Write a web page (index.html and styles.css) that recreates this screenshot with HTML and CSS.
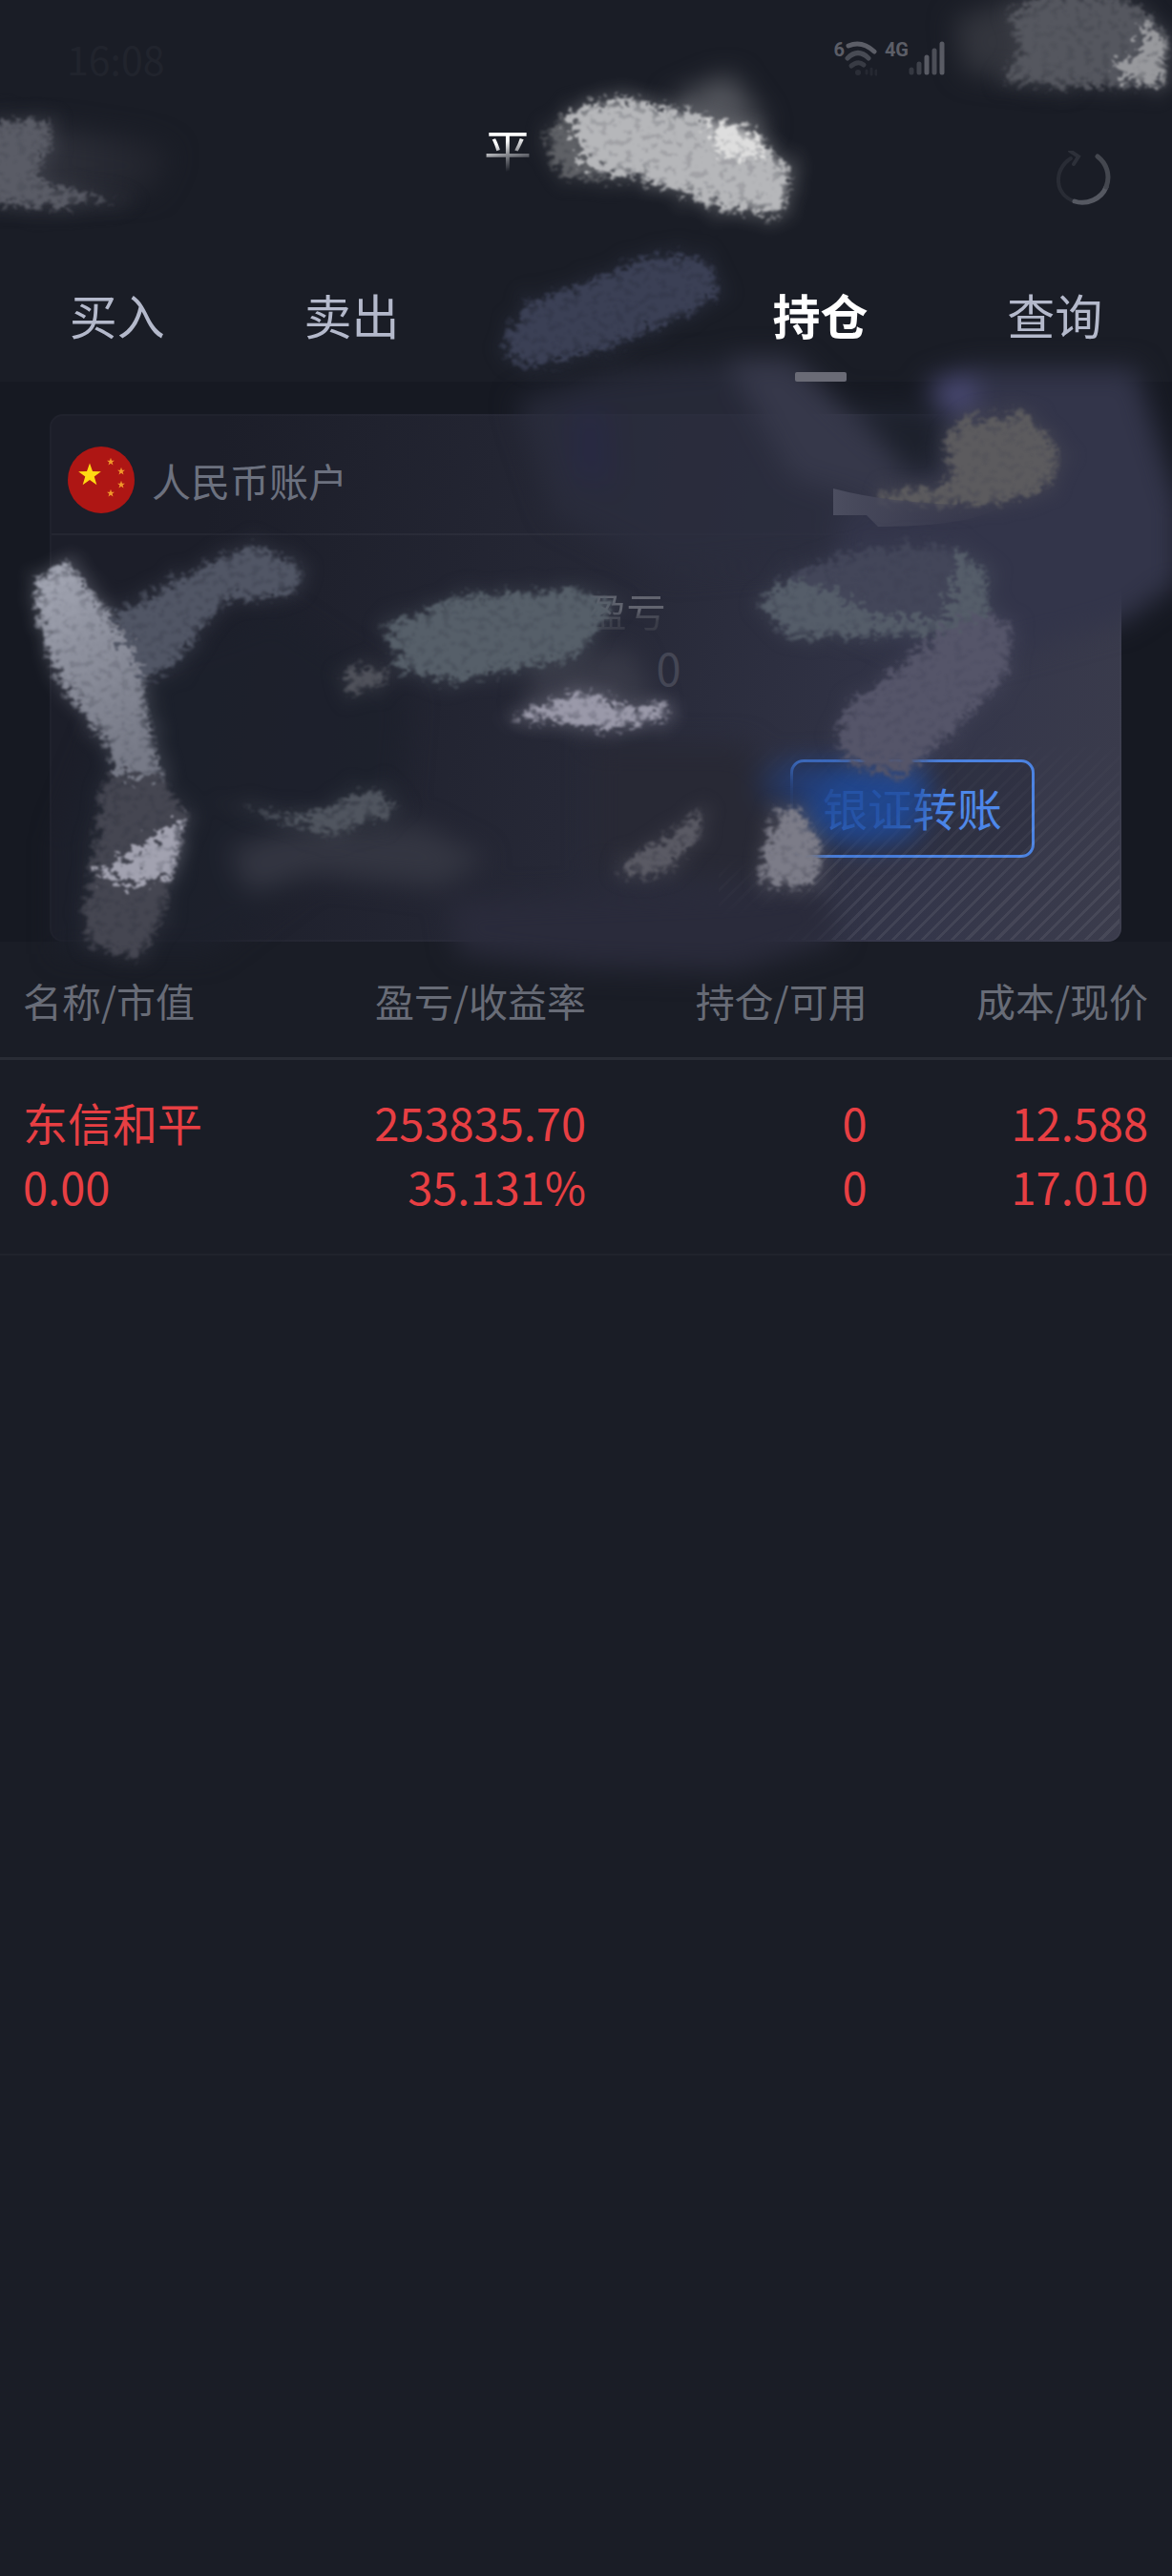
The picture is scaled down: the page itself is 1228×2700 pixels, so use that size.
FILE: index.html
```html
<!DOCTYPE html>
<html lang="zh-CN">
<head>
    <meta charset="UTF-8">
    <meta name="viewport" content="width=device-width, initial-scale=1.0">
    <title>持仓</title>
    <link rel="stylesheet" href="styles.css">
</head>
<body>
    <header class="header">
        <div class="status-bar">
            <span class="time">16:08</span>
            <div class="signals">
                <span class="net">6</span>
                <svg class="wifi" viewBox="0 0 34 38" fill="none" stroke-linecap="round">
                    <path d="M4 6Q18 0 31 12" stroke="#5c5e67" stroke-width="5"/>
                    <path d="M3 19Q14 8 25 19" stroke="#484b54" stroke-width="5"/>
                    <path d="M7 27Q14 21 20 26" stroke="#383b44" stroke-width="5"/>
                    <circle cx="14" cy="34" r="3" fill="#2b2e37"/>
                    <path d="M23 35v-3M28 36v-6M33 36v-4" stroke="#252831" stroke-width="3"/>
                </svg>
                <span class="net net-4g">4G</span>
                <svg class="bars" viewBox="0 0 38 38" fill="none" stroke-width="5" stroke-linecap="round">
                    <path d="M3 31v3" stroke="#353841"/>
                    <path d="M11 25v9" stroke="#3f424b"/>
                    <path d="M19 18v16" stroke="#595b64"/>
                    <path d="M27 11v23" stroke="#4d4f58"/>
                    <path d="M35 4v30" stroke="#5c5e67"/>
                </svg>
            </div>
        </div>

        <div class="title-bar">
            <h1 class="title">平</h1>
            <button class="refresh" type="button" aria-label="刷新">
                <svg viewBox="0 0 60 60" fill="none" stroke-linecap="round">
                    <path d="M18 8C-1 20 1 47 22 53" stroke="#292c35" stroke-width="4"/>
                    <path d="M22 53C34 57 50 51 55 38" stroke="#555861" stroke-width="5"/>
                    <path d="M55 38C60 25 55 13 46 6" stroke="#44474f" stroke-width="5"/>
                    <path d="M17 0l9 6-5 8" stroke="#2d3039" stroke-width="4"/>
                </svg>
            </button>
        </div>

        <nav class="tabs">
            <a class="tab" href="#buy">买入</a>
            <a class="tab" href="#sell">卖出</a>
            <span class="tab"></span>
            <a class="tab tab-active" href="#holdings">持仓</a>
            <a class="tab" href="#query">查询</a>
        </nav>
    </header>

    <main>
        <section class="account">
            <div class="card">
                <div class="card-head">
                    <svg class="flag" viewBox="0 0 70 70">
                        <defs>
                            <path id="star" d="M0-10L2.4-3.2 9.5-3.1 3.8 1.2 5.9 8.1 0 4 -5.9 8.1 -3.8 1.2 -9.5-3.1 -2.4-3.2Z"/>
                        </defs>
                        <circle cx="35" cy="35" r="35" fill="#ae1614"/>
                        <use href="#star" transform="translate(23 30) scale(1.25)" fill="#ffd813"/>
                        <g fill="#f0992b">
                            <use href="#star" transform="translate(45 16) scale(.42)"/>
                            <use href="#star" transform="translate(56 26) scale(.42)"/>
                            <use href="#star" transform="translate(56 40) scale(.42)"/>
                            <use href="#star" transform="translate(45 49) scale(.42)"/>
                        </g>
                    </svg>
                    <h2 class="card-title">人民币账户</h2>
                </div>
                <div class="card-body">
                    <div class="profit">
                        <span class="profit-label">盈亏</span>
                        <span class="profit-value">0</span>
                    </div>
                    <button class="transfer" type="button">银证转账</button>
                </div>
            </div>
        </section>

        <table class="holdings">
            <thead>
                <tr>
                    <th>名称/市值</th>
                    <th>盈亏/收益率</th>
                    <th>持仓/可用</th>
                    <th>成本/现价</th>
                </tr>
            </thead>
            <tbody>
                <tr>
                    <td><span>东信和平</span><span>0.00</span></td>
                    <td><span>253835.70</span><span>35.131%</span></td>
                    <td><span>0</span><span>0</span></td>
                    <td><span>12.588</span><span>17.010</span></td>
                </tr>
            </tbody>
        </table>
    </main>

    <!-- brush strokes that hide the private figures -->
    <svg class="strokes" viewBox="0 0 1228 1060" aria-hidden="true">
        <defs>
            <filter id="brush" x="-20%" y="-20%" width="140%" height="140%" color-interpolation-filters="sRGB">
                <feTurbulence type="fractalNoise" baseFrequency="0.11 0.15" numOctaves="4" seed="4" result="noise"/>
                <feDisplacementMap in="SourceGraphic" in2="noise" scale="44" xChannelSelector="R" yChannelSelector="G" result="rough"/>
                <feGaussianBlur in="rough" stdDeviation="8" result="soft"/>
                <feColorMatrix in="noise" type="matrix" values="0 0 0 0 1  0 0 0 0 1  0 0 0 0 1  4 0 0 0 -1.5" result="grain"/>
                <feComposite in="soft" in2="grain" operator="arithmetic" k2="2.4" k3="1" k4="-1.6" result="mask"/>
                <feComposite in="rough" in2="mask" operator="in" result="cut"/>
                <feGaussianBlur in="cut" stdDeviation="1" result="body"/>
                <feComponentTransfer in="soft" result="halo">
                    <feFuncA type="linear" slope="0.35"/>
                </feComponentTransfer>
                <feMerge>
                    <feMergeNode in="halo"/>
                    <feMergeNode in="body"/>
                </feMerge>
            </filter>
            <filter id="smudge" x="-20%" y="-20%" width="140%" height="140%" color-interpolation-filters="sRGB">
                <feGaussianBlur stdDeviation="14"/>
            </filter>
            <linearGradient id="paint" x1="0" y1="0" x2="0.4" y2="1">
                <stop offset="0" stop-color="#a9acb9"/>
                <stop offset="0.5" stop-color="#8d909d"/>
                <stop offset="1" stop-color="#777a87"/>
            </linearGradient>
            <linearGradient id="trail" x1="0" y1="0" x2="1" y2="0">
                <stop offset="0" stop-color="#33353f"/>
                <stop offset="1" stop-color="#20222b"/>
            </linearGradient>
            <linearGradient id="tail">
                <stop offset="0" stop-color="#4c4e60"/>
                <stop offset="1" stop-color="#3a3a4d" stop-opacity="0.2"/>
            </linearGradient>
        </defs>

        <!-- top of the page -->
        <g filter="url(#smudge)">
            <path d="M0 135L60 135 150 148 180 160 160 200 60 206 0 205Z" fill="url(#trail)"/>
            <path d="M1000 20L1060 0 1120 5 1120 88 1010 76Z" fill="#33353d"/>
            <path d="M700 105L765 78 805 135 740 130Z" fill="#55575e"/>
        </g>
        <g filter="url(#brush)">
            <path d="M-20 124L56 120 60 150 42 180 62 194 150 212 60 222-20 218Z" fill="#5a5c66"/>
            <path d="M1050 8L1100-12 1170-10 1212 12 1230 45 1222 96 1130 96 1040 88 1070 50Z" fill="#55575f"/>
            <path d="M1195 20L1224 40 1224 90 1180 86 1168 66 1195 56Z" fill="#98999d"/>
            <path d="M563 148L600 108 660 110 660 190 590 192Z" fill="#5f6166"/>
            <path d="M592 114L650 96 720 112 792 134 838 178 824 230 760 224 690 198 614 176Z" fill="#b6b7ba"/>
            <path d="M742 122L800 136 808 166 754 164Z" fill="#dedede"/>
            <path d="M520 370L545 314 620 290 690 260 745 266 762 312 700 344 640 370 560 390Z" fill="#3b4055"/>
        </g>

        <!-- right corner of the card -->
        <g filter="url(#smudge)">
            <path d="M540 420L640 390 740 380 850 400 960 500 940 580 700 600 580 540Z" fill="#2b2d3d" opacity=".8"/>
            <path d="M600 430L635 430 640 510 600 500Z" fill="#26264a" opacity=".5"/>
            <path d="M760 375L830 375 960 500 930 530 830 500Z" fill="#36384a"/>
            <path d="M970 402L1020 386 1190 386 1210 450 1235 530 1235 610 1180 650 1000 700 870 640 880 540 1000 500Z" fill="#33354a"/>
            <path d="M890 420L990 425 985 495 950 495Z" fill="#1d212c"/>
            <path d="M975 400L1022 392 1020 430 990 430Z" fill="#4c4c78"/>
        </g>
        <g filter="url(#brush)">
            <path d="M918 512L990 506 990 452 1010 434 1080 430 1116 472 1108 512 1040 534 920 532Z" fill="#5c5b5e"/>
        </g>
        <path d="M873 512Q940 530 1050 530 1020 552 920 552L908 540H873Z" fill="url(#tail)"/>

        <!-- card figures -->
        <g filter="url(#smudge)">
            <path d="M60 880L130 700 290 640 430 730 420 850 220 1000 60 1000Z" fill="#1d202c" opacity=".8"/>
            <path d="M240 890L300 872 440 864 510 900 460 930 330 915 260 936Z" fill="#343642"/>
            <path d="M470 945L860 930 880 985 770 1018 610 1014 480 1000Z" fill="#2a2b3b"/>
            <path d="M620 780L780 780 840 840 850 930 700 920 620 910Z" fill="#282935"/>
            <path d="M560 690L660 680 690 745 550 745Z" fill="#40414f" opacity=".7"/>
            <path d="M820 800L965 798 975 840 955 880 900 888 850 874Z" fill="#1f4a9a" opacity=".85"/>
            <path d="M795 805L880 800 850 850 800 840Z" fill="#253a6c" opacity=".7"/>
        </g>
        <g filter="url(#brush)">
            <path d="M120 640L200 594 270 564 322 594 314 624 232 636 186 704 146 716Z" fill="#515665"/>
            <path d="M30 612L74 582 110 632 152 710 176 822 134 824 98 768 50 696Z" fill="url(#paint)"/>
            <path d="M398 652L480 620 614 614 652 630 622 674 600 696 470 720 420 706Z" fill="#565f69"/>
            <path d="M348 708L380 692 416 704 400 724 362 734Z" fill="#50525b"/>
            <path d="M518 754L612 720 660 738 706 732 706 756 636 770Z" fill="#9a99a9"/>
            <path d="M790 636L824 598 910 570 994 566 1038 592 1042 646 960 670 826 672Z" fill="#434659"/>
            <path d="M790 636L828 602 870 618 920 646 990 648 1010 572 1040 596 1042 644 960 670 830 672Z" fill="#555d69"/>
            <path d="M872 770L886 738 970 672 1020 644 1066 650 1062 708 1002 772 950 820 888 804Z" fill="#555569"/>
            <path d="M108 812L166 812 204 850 190 900 176 960 150 1010 84 994 88 940Z" fill="#454651"/>
            <path d="M98 918L196 856 186 920 140 928Z" fill="#a2a2b0"/>
            <path d="M226 840L320 850 392 820 430 850 346 880Z" fill="#50555f"/>
            <path d="M644 902L690 880 742 838 736 882 696 922 646 920Z" fill="#5a5a64"/>
            <path d="M810 842L844 846 866 886 860 932 792 936Z" fill="#7c7c88"/>
        </g>
    </svg>
</body>
</html>
```
FILE: styles.css
```css
* {
    box-sizing: border-box;
}

body {
    position: relative;
    margin: 0;
    min-height: 100vh;
    overflow-x: hidden;
    background-color: #1a1d26;
    font-family: "Noto Sans CJK SC", sans-serif;
}

button {
    padding: 0;
    border: none;
    background: none;
    font-family: inherit;
    cursor: pointer;
}

/* status bar */
.status-bar {
    display: flex;
    justify-content: space-between;
    align-items: center;
    height: 98px;
    padding: 24px 238px 0 70px;
}

.time {
    color: #21242d;
    font-size: 41px;
}

.signals {
    display: flex;
    align-items: flex-start;
}

.net {
    color: #5c5e67;
    font-family: Roboto, sans-serif;
    font-size: 20px;
    font-weight: bold;
    line-height: 20px;
}

.net-4g {
    margin-left: 8px;
}

.wifi {
    width: 34px;
    height: 38px;
}

.bars {
    width: 38px;
    height: 38px;
}

/* title */
.title-bar {
    display: flex;
    justify-content: center;
    position: relative;
    height: 120px;
}

.title {
    width: 214px;
    margin: 0;
    background: linear-gradient(165deg, #fff 42%, #8d8f95 52%, #1a1d26 66%);
    background-size: 53px 100%;
    background-repeat: no-repeat;
    background-clip: text;
    -webkit-background-clip: text;
    color: transparent;
    font-size: 50px;
    font-weight: normal;
    line-height: 116px;
}

.refresh {
    position: absolute;
    right: 64px;
    bottom: 0;
    width: 60px;
    height: 60px;
}

/* tabs */
.tabs {
    display: grid;
    grid-template-columns: repeat(5, 1fr);
    position: relative;
    z-index: 1;
    margin-top: 48px;
}

.tab {
    position: relative;
    height: 134px;
    color: #b4b9cb;
    font-size: 50px;
    line-height: 126px;
    text-align: center;
    text-decoration: none;
}

.tab-active {
    color: #fff;
    font-weight: bold;
}

.tab-active::after {
    content: "";
    position: absolute;
    bottom: 0;
    left: 50%;
    width: 54px;
    height: 10px;
    margin-left: -27px;
    border-radius: 2px;
    background-color: #6a6b76;
}

/* account card */
.account {
    padding: 34px 53px 0 52px;
    background-color: #161922;
}

.card {
    position: relative;
    border: 2px solid rgba(255, 255, 255, 0.02);
    border-radius: 14px;
    background: linear-gradient(100deg, #1c1e29 15%, #262836 50%, #34364a 82%, #3b3c4c 100%) border-box;
    overflow: hidden;
}

.card::after {
    content: "";
    position: absolute;
    right: 0;
    bottom: 0;
    width: 420px;
    height: 240px;
    background: repeating-linear-gradient(135deg, rgba(255, 255, 255, 0.07) 0 3px, transparent 3px 11px);
    -webkit-mask-image: linear-gradient(to top, #000 20%, transparent 90%);
    mask-image: linear-gradient(to top, #000 20%, transparent 90%);
    pointer-events: none;
}

.card-head {
    display: flex;
    align-items: center;
    gap: 18px;
    height: 125px;
    padding: 10px 17px 0;
    border-bottom: 2px solid rgba(255, 255, 255, 0.04);
}

.flag {
    width: 70px;
    height: 70px;
}

.card-title {
    margin: 0;
    color: #6c717f;
    font-size: 41px;
    font-weight: normal;
    line-height: 60px;
}

.card-body {
    height: 424px;
    padding: 48px 89px 0;
}

.profit {
    display: grid;
    justify-content: center;
    justify-items: end;
    align-content: start;
    height: 187px;
    padding-left: 86px;
}

.profit-label {
    background: linear-gradient(#62646f 50%, #3a3c48 70%);
    background-clip: text;
    -webkit-background-clip: text;
    color: transparent;
    font-size: 41px;
    line-height: 60px;
}

.profit-value {
    margin-right: -16px;
    color: #454755;
    font-size: 47px;
    line-height: 60px;
}

.transfer {
    display: block;
    width: 256px;
    height: 103px;
    margin-left: auto;
    padding-bottom: 4px;
    border: 3px solid #4b82e0;
    border-radius: 14px;
    background-color: rgba(38, 40, 54, 0.4);
    color: #4b86ea;
    font-size: 47px;
    line-height: 90px;
}

/* holdings table */
.holdings {
    width: 100%;
    border-collapse: collapse;
    table-layout: fixed;
}

.holdings th,
.holdings td {
    width: 24%;
    padding: 0;
    font-weight: normal;
    text-align: right;
}

.holdings th {
    height: 122px;
    padding-top: 2px;
    border-bottom: 3px solid #292c35;
    color: #686c77;
    font-size: 41px;
    line-height: 60px;
}

.holdings td {
    height: 206px;
    padding-bottom: 6px;
    border-bottom: 2px solid #20232c;
    color: #e83f43;
    font-size: 47px;
    line-height: 67px;
}

.holdings th:first-child,
.holdings td:first-child {
    width: 26%;
    padding-left: 24px;
    text-align: left;
}

.holdings th:last-child,
.holdings td:last-child {
    width: 26%;
    padding-right: 25px;
}

.holdings td span {
    display: block;
}

/* brush strokes */
.strokes {
    position: absolute;
    top: 0;
    left: 0;
    width: 100%;
    pointer-events: none;
}
```
